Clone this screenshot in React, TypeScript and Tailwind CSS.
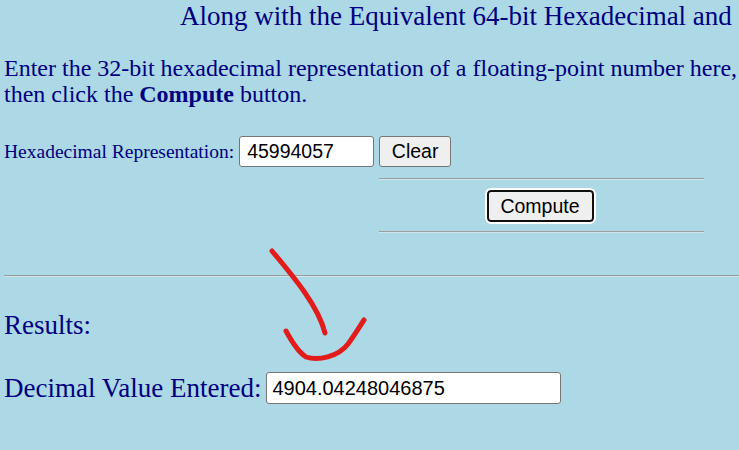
export default function App() {
  return (
    <div className="relative h-[450px] w-[739px] overflow-hidden bg-[#add8e6] font-['Liberation_Serif',serif] text-[#000080]">
      <h2 className="whitespace-nowrap pl-[180px] pt-[1px] text-[27px] leading-[31px] font-normal">
        Along with the Equivalent 64-bit Hexadecimal and Binary Patterns
      </h2>

      <p className="mt-[23px] whitespace-nowrap pl-[4px] text-[24px] leading-[26px]">
        Enter the 32-bit hexadecimal representation of a floating-point number here,
        <br />
        then click the <b>Compute</b> button.
      </p>

      <div className="mt-[29px] flex items-center pl-[4px]">
        <span className="text-[19.5px]">Hexadecimal Representation:</span>
        <input
          readOnly
          value="45994057"
          className="ml-[5px] h-[31px] w-[135px] rounded-[3px] border border-[#767676] bg-white px-[7px] font-['Liberation_Sans',sans-serif] text-[19.5px] text-black outline-none"
        />
        <button
          type="button"
          className="ml-[5px] h-[31px] w-[72px] rounded-[3px] border border-[#767676] bg-[#efefef] font-['Liberation_Sans',sans-serif] text-[19.5px] text-black"
        >
          Clear
        </button>
      </div>

      <div className="ml-[379px] mt-[11px] w-[325px]">
        <div className="border-t border-b border-t-[#9c9c9c] border-b-[#cfe6ee]" />
        <div className="flex justify-center pt-[10px] pb-[9px]">
          <button
            type="button"
            className="ml-[-3px] h-[32px] w-[107px] rounded-[4px] border-2 border-[#101010] bg-[#efefef] font-['Liberation_Sans',sans-serif] text-[19.5px] text-black outline outline-2 outline-white"
          >
            Compute
          </button>
        </div>
        <div className="border-t border-b border-t-[#9c9c9c] border-b-[#cfe6ee]" />
      </div>

      <div className="ml-[4px] mt-[42px] border-t border-b border-t-[#9c9c9c] border-b-[#cfe6ee]" />

      <div className="mt-[33px] pl-[4px] text-[27px] leading-[31px]">Results:</div>

      <div className="mt-[31px] flex items-center pl-[4px]">
        <span className="text-[27px] leading-[31px]">Decimal Value Entered:</span>
        <input
          readOnly
          value="4904.04248046875"
          className="ml-[5px] h-[32px] w-[295px] rounded-[3px] border border-[#767676] bg-white px-[5px] font-['Liberation_Sans',sans-serif] text-[20px] text-black outline-none"
        />
      </div>

      <svg
        className="pointer-events-none absolute left-0 top-0"
        width="739"
        height="450"
        viewBox="0 0 739 450"
        fill="none"
      >
        <path
          d="M272 251 C 292 275, 318 305, 325 333"
          stroke="#e21b1b"
          strokeWidth="5"
          strokeLinecap="round"
        />
        <path
          d="M286 331 C 292 342, 298 352, 306 357 C 318 361, 338 357, 348 344 C 354 336, 360 326, 364 320"
          stroke="#e21b1b"
          strokeWidth="5"
          strokeLinecap="round"
        />
      </svg>
    </div>
  );
}
